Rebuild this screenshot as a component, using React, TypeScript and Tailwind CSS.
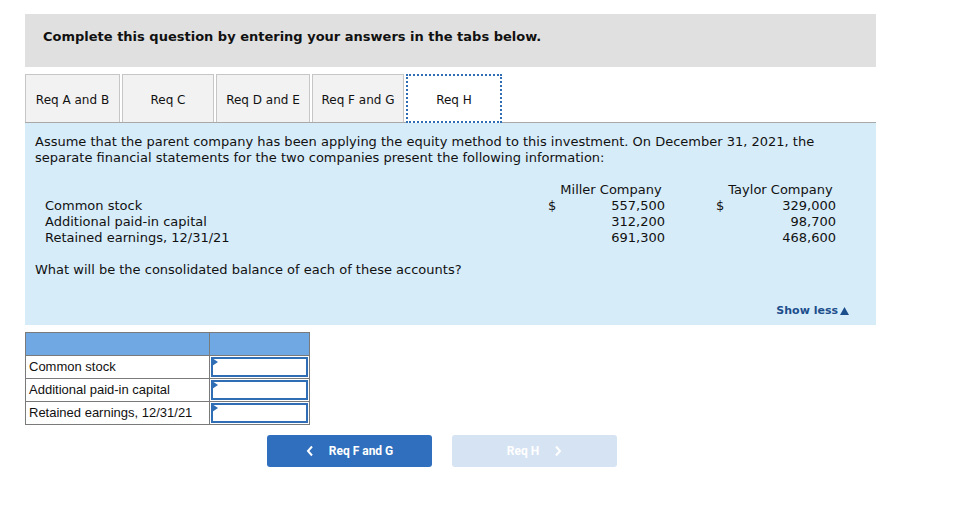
import React from "react";

const tabs = [
  { t: "Req A and B", w: "w-[95px]" },
  { t: "Req C", w: "w-[92px]" },
  { t: "Req D and E", w: "w-[94px]" },
  { t: "Req F and G", w: "w-[92px]" },
  { t: "Req H", w: "w-[96px]" },
];

const given = [
  { label: "Common stock", miller: "557,500", taylor: "329,000", sign: true },
  { label: "Additional paid-in capital", miller: "312,200", taylor: "98,700" },
  { label: "Retained earnings, 12/31/21", miller: "691,300", taylor: "468,600" },
];

function InputCell() {
  return (
    <div className="relative h-[22px] border-l border-[#7a7a7a] p-px">
      <div className="relative h-full border-2 border-[#2f6db5] bg-white">
        <span className="absolute -left-px -top-px h-0 w-0 border-y-[4px] border-l-[6px] border-y-transparent border-l-[#2f6db5]" />
      </div>
    </div>
  );
}

export default function App() {
  return (
    <div className="min-h-[529px] bg-white pl-[25px] pt-[14px] font-['DejaVu_Sans',Verdana,sans-serif] text-[#111]">
      <div className="w-[851px]">
        <div className="h-[53px] bg-[#e0e0e0] pl-[18px] pt-[13px] text-[13px] font-bold">
          Complete this question by entering your answers in the tabs below.
        </div>

        <div className="mt-2 flex h-[48px] items-end gap-[2px] border-b border-[#a9a9a9]">
          {tabs.map((tab, i) => (
            <div
              key={tab.t}
              className={
                i === 4
                  ? `-mb-px flex h-[49px] ${tab.w} items-center justify-center border-2 border-dotted border-[#2f6db5] bg-white pt-[3px] text-[12px]`
                  : `flex h-[48px] ${tab.w} items-center justify-center border border-b-0 border-[#c6c6c6] bg-[#f2f2f2] pt-[3px] text-[12px]`
              }
            >
              {tab.t}
            </div>
          ))}
        </div>

        <div className="h-[202px] bg-[#d7ecf9] px-[10px] pt-[11px] text-[13px] leading-[16px]">
          <p>
            Assume that the parent company has been applying the equity method to this investment. On December 31, 2021, the
            separate financial statements for the two companies present the following information:
          </p>
          <div className="mt-[16px] grid grid-cols-[500px_20px_100px_65px_106px] pl-[10px]">
            <div />
            <div className="col-span-2 pl-[12px] text-center">Miller Company</div>
            <div className="col-span-2 pl-[60px] text-center">Taylor Company</div>
            {given.map((r) => (
              <React.Fragment key={r.label}>
                <div>{r.label}</div>
                <div className="pl-[3px]">{r.sign ? "$" : ""}</div>
                <div className="text-right">{r.miller}</div>
                <div className="pl-[51px]">{r.sign ? "$" : ""}</div>
                <div className="text-right">{r.taylor}</div>
              </React.Fragment>
            ))}
          </div>
          <p className="mt-[16px]">What will be the consolidated balance of each of these accounts?</p>
          <div className="mt-[25px] flex items-center justify-end gap-[2px] pr-[17px] text-[11px] font-bold text-[#1d4f8c]">
            Show less
            <svg width="9" height="8" viewBox="0 0 9 8">
              <path d="M4.5 0 L9 8 L0 8 Z" fill="#1d4f8c" />
            </svg>
          </div>
        </div>

        <div className="mt-[7px] w-[285px] border border-[#7a7a7a] font-['Liberation_Sans',Arial,sans-serif] text-[13px]">
          <div className="grid h-[22px] grid-cols-[183px_100px] bg-[#6fa8e3]">
            <div />
            <div className="border-l border-[#7a7a7a]" />
          </div>
          {given.map((r) => (
            <div key={r.label} className="grid grid-cols-[183px_100px] border-t border-[#7a7a7a]">
              <div className="flex items-center pl-[3px]">{r.label}</div>
              <InputCell />
            </div>
          ))}
        </div>

        <div className="mt-[10px] flex gap-[20px] pl-[242px] font-['Roboto',sans-serif] text-[12px] font-bold">
          <button className="flex h-[32px] w-[165px] items-center justify-center gap-[15px] rounded-[3px] bg-[#2f6fbd] text-white">
            <svg width="8" height="12" viewBox="0 0 8 12">
              <path d="M6 1.5 L2 6 L6 10.5" stroke="white" strokeWidth="2" fill="none" />
            </svg>
            Req F and G
          </button>
          <button className="flex h-[32px] w-[165px] items-center justify-center gap-[15px] rounded-[3px] bg-[#d6e3f3] text-white">
            Req H
            <svg width="8" height="12" viewBox="0 0 8 12">
              <path d="M2 1.5 L6 6 L2 10.5" stroke="white" strokeWidth="2" fill="none" />
            </svg>
          </button>
        </div>
      </div>
    </div>
  );
}
